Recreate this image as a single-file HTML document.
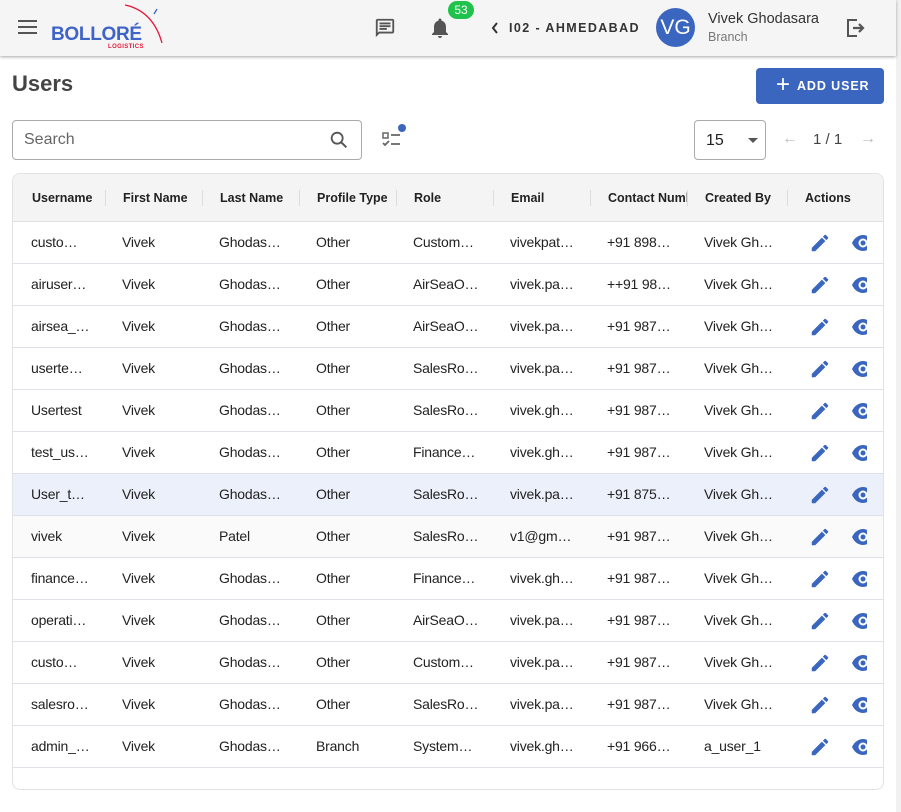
<!DOCTYPE html>
<html><head><meta charset="utf-8"><style>
*{box-sizing:border-box;margin:0;padding:0}
body{width:901px;height:812px;background:#fff;font-family:"Liberation Sans",Roboto,sans-serif;position:relative;overflow:hidden;color:#222}
.sb{position:absolute;right:0;top:0;width:5px;height:812px;background:#f1f1f1}
.top{position:absolute;left:0;top:0;width:896px;height:56px;background:#f5f5f5;box-shadow:0 1px 3px rgba(0,0,0,.35)}
.abs{position:absolute}
h1{position:absolute;left:12px;top:71px;font-size:22px;font-weight:bold;color:#444}
.btn{position:absolute;left:756px;top:68px;width:128px;height:36px;background:#3a66bf;border-radius:4px;color:#fff;font-size:12.5px;font-weight:bold;letter-spacing:0.9px;line-height:36px;padding-left:41px;white-space:nowrap}
.search{position:absolute;left:12px;top:120px;width:350px;height:40px;border:1px solid #aaa;border-radius:4px;font-size:16px;color:#666;padding:10px 11px}
.sel{position:absolute;left:694px;top:120px;width:72px;height:40px;border:1px solid #aaa;border-radius:4px;font-size:16px;padding:11px 11px}
.tbl{position:absolute;left:12px;top:173px;width:872px;height:617px;border:1px solid #e2e2e2;border-radius:8px;overflow:hidden}
.hd{position:absolute;left:0;top:0;width:872px;height:48px;background:#f4f4f4;border-bottom:1px solid #e0e0e0}
.row{position:absolute;left:0;width:872px;height:42px;border-bottom:1px solid #e0e0e8;font-size:14px;color:#222;letter-spacing:-0.2px}
.c{position:absolute;top:0;line-height:41px;white-space:nowrap}
.h{position:absolute;top:0;line-height:48px;font-size:12.5px;font-weight:bold;color:#222;white-space:nowrap}
.sep{position:absolute;top:16px;width:1px;height:16px;background:#ddd}
.eye{position:absolute;left:838px;top:12px;width:16px;height:18px;overflow:hidden}
</style></head><body>
<div class="sb"></div>
<div class="top">
<svg class="abs" style="left:18px;top:19px" width="20" height="16"><rect y="1" width="19" height="2" fill="#555"/><rect y="7" width="19" height="2" fill="#555"/><rect y="13" width="19" height="2" fill="#555"/></svg>
<div class="abs" style="left:51px;top:24px;font-size:19px;font-weight:bold;color:#3f64c8;letter-spacing:-0.3px">BOLLORÉ</div>
<div class="abs" style="left:108px;top:44px;font-size:6px;font-weight:bold;color:#e4173b;letter-spacing:.4px">LOGISTICS</div>
<svg class="abs" style="left:120px;top:3px" width="45" height="42"><path d="M5 2 Q33 8 42 40" stroke="#e4173b" stroke-width="1.3" fill="none"/><path d="M37 6 L34 11" stroke="#3f64c8" stroke-width="1.3"/></svg>
<svg class="abs" style="left:374px;top:17px" width="22" height="22" viewBox="0 0 24 24"><path d="M20 2H4c-1.1 0-2 .9-2 2v18l4-4h14c1.1 0 2-.9 2-2V4c0-1.1-.9-2-2-2zm0 14H5.2L4 17.2V4h16v12zM6 12h8v2H6zm0-3h12v2H6zm0-3h12v2H6z" fill="#555"/></svg>
<svg class="abs" style="left:428px;top:16px" width="24" height="24" viewBox="0 0 24 24"><path d="M12 22c1.1 0 2-.9 2-2h-4c0 1.1.9 2 2 2zm6-6v-5c0-3.07-1.63-5.64-4.5-6.32V4c0-.83-.67-1.5-1.5-1.5s-1.5.67-1.5 1.5v.68C7.64 5.36 6 7.92 6 11v5l-2 2v1h16v-1l-2-2z" fill="#555"/></svg>
<div class="abs" style="left:448px;top:1px;width:26px;height:18px;background:#1fc24a;border-radius:9px;color:#fff;font-size:12px;text-align:center;line-height:18px">53</div>
<svg class="abs" style="left:490px;top:21px" width="10" height="14"><path d="M7 2 L3 7 L7 12" stroke="#333" stroke-width="2" fill="none"/></svg>
<div class="abs" style="left:509px;top:21px;font-size:12.5px;font-weight:bold;letter-spacing:1.4px;color:#333">I02 - AHMEDABAD</div>
<div class="abs" style="left:656px;top:8px;width:39px;height:39px;border-radius:50%;background:#3a66bf;color:#fff;font-size:21px;text-align:center;line-height:39px">VG</div>
<div class="abs" style="left:708px;top:11px;font-size:14.5px;color:#333">Vivek Ghodasara</div>
<div class="abs" style="left:708px;top:30px;font-size:12.5px;color:#777">Branch</div>
<svg class="abs" style="left:845px;top:16px" width="22" height="24" viewBox="0 0 22 24"><path d="M12 4H3v16h9" stroke="#555" stroke-width="2" fill="none"/><path d="M8 12h9M14 8l4 4-4 4" stroke="#555" stroke-width="2.2" fill="none"/></svg>
</div>
<h1>Users</h1>
<div class="btn"><span style="position:absolute;left:20px;top:-1px;font-size:24px;font-weight:normal">+</span>ADD USER</div>
<div class="search">Search
<svg class="abs" style="left:315px;top:8px" width="22" height="22" viewBox="0 0 24 24"><circle cx="10" cy="10" r="6" stroke="#555" stroke-width="2" fill="none"/><path d="M14.5 14.5 L20 20" stroke="#555" stroke-width="2.2"/></svg></div>
<svg class="abs" style="left:382px;top:124px" width="26" height="28"><rect x="1" y="9" width="5" height="5" stroke="#666" stroke-width="1.5" fill="none"/><path d="M9 11h9M9 20h9M1 19l2 2 4-4" stroke="#666" stroke-width="1.8" fill="none"/><circle cx="20" cy="4" r="4" fill="#3a66bf"/></svg>
<div class="sel">15<svg class="abs" style="left:53px;top:17px" width="12" height="6"><path d="M0 0h10L5 5z" fill="#555"/></svg></div>
<div class="abs" style="left:782px;top:130px;font-size:16px;color:#bbb">←</div>
<div class="abs" style="left:813px;top:131px;font-size:15px;color:#444">1 / 1</div>
<div class="abs" style="left:860px;top:130px;font-size:16px;color:#bbb">→</div>
<div class="tbl">
<div class="hd">
<div class="h" style="left:19px">Username</div><div class="sep" style="left:92px"></div>
<div class="h" style="left:110px">First Name</div><div class="sep" style="left:189px"></div>
<div class="h" style="left:207px">Last Name</div><div class="sep" style="left:286px"></div>
<div class="h" style="left:304px">Profile Type</div><div class="sep" style="left:383px"></div>
<div class="h" style="left:401px">Role</div><div class="sep" style="left:480px"></div>
<div class="h" style="left:498px">Email</div><div class="sep" style="left:577px"></div>
<div class="h" style="left:595px;width:80px;overflow:hidden">Contact Number</div><div class="sep" style="left:674px"></div>
<div class="h" style="left:692px">Created By</div><div class="sep" style="left:774px"></div>
<div class="h" style="left:792px">Actions</div>
</div>
<div id="rows"></div>
</div>
<script>
var d=[["custo…","Ghodas…","Other","Custom…","vivekpat…","+91 898…","Vivek Gh…"],
["airuser…","Ghodas…","Other","AirSeaO…","vivek.pa…","++91 98…","Vivek Gh…"],
["airsea_…","Ghodas…","Other","AirSeaO…","vivek.pa…","+91 987…","Vivek Gh…"],
["userte…","Ghodas…","Other","SalesRo…","vivek.pa…","+91 987…","Vivek Gh…"],
["Usertest","Ghodas…","Other","SalesRo…","vivek.gh…","+91 987…","Vivek Gh…"],
["test_us…","Ghodas…","Other","Finance…","vivek.gh…","+91 987…","Vivek Gh…"],
["User_t…","Ghodas…","Other","SalesRo…","vivek.pa…","+91 875…","Vivek Gh…"],
["vivek","Patel","Other","SalesRo…","v1@gm…","+91 987…","Vivek Gh…"],
["finance…","Ghodas…","Other","Finance…","vivek.gh…","+91 987…","Vivek Gh…"],
["operati…","Ghodas…","Other","AirSeaO…","vivek.pa…","+91 987…","Vivek Gh…"],
["custo…","Ghodas…","Other","Custom…","vivek.pa…","+91 987…","Vivek Gh…"],
["salesro…","Ghodas…","Other","SalesRo…","vivek.pa…","+91 987…","Vivek Gh…"],
["admin_…","Ghodas…","Branch","System…","vivek.gh…","+91 966…","a_user_1"]];
var h="",xs=[18,109,206,303,400,497,594,691];
d.forEach(function(r,i){var bg=i==6?"#ebf0fa":(i==7?"#fafafa":"#fff");
var cells=[r[0],"Vivek",r[1],r[2],r[3],r[4],r[5],r[6]];
h+='<div class="row" style="top:'+(48+i*42)+'px;background:'+bg+'">';
cells.forEach(function(c,j){h+='<div class="c" style="left:'+xs[j]+'px">'+c+'</div>'});
h+='<svg class="abs" style="left:796px;top:10px" width="22" height="22" viewBox="0 0 24 24"><path d="M3 17.25V21h3.75L17.81 9.94l-3.75-3.75L3 17.25zM20.71 7.04a1 1 0 000-1.41l-2.34-2.34a1 1 0 00-1.41 0l-1.83 1.83 3.75 3.75 1.83-1.83z" fill="#3a66bf"/></svg>';
h+='<div class="eye"><svg width="24" height="18" viewBox="0 0 24 18"><path d="M1 9C3.5 3.5 8 1 12 1s8.5 2.5 11 8c-2.5 5.5-7 8-11 8S3.5 14.5 1 9z" fill="#3a66bf"/><circle cx="12" cy="9" r="4.5" fill="#fff"/><circle cx="12" cy="9" r="2.5" fill="#3a66bf"/></svg></div>';
h+='</div>'});
document.getElementById("rows").innerHTML=h;
</script>
</body></html>
